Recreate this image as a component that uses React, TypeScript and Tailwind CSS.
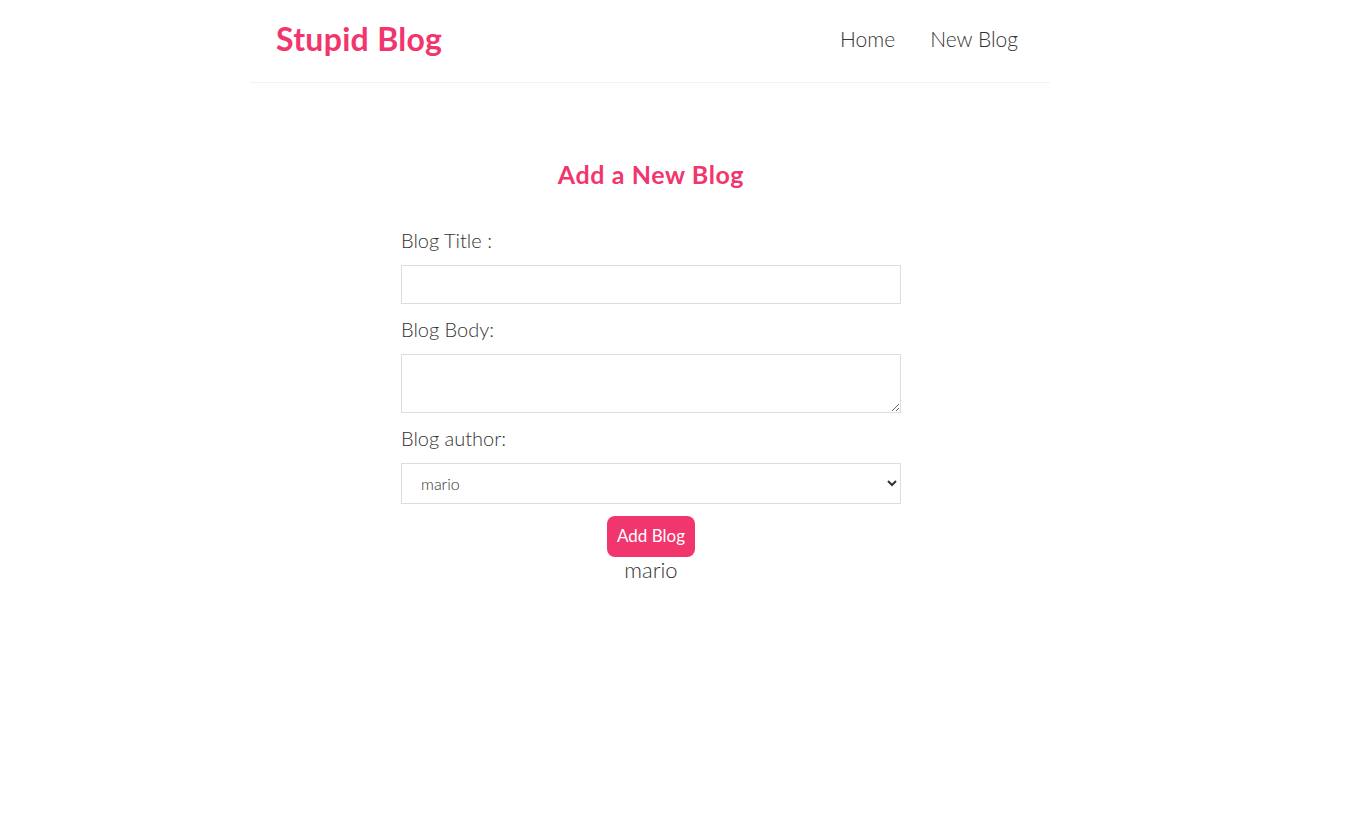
import { useState } from "react";

const Navbar = () => {
  return (
    <nav className="max-w-[800px] mx-auto h-[83px] pb-[4px] flex items-center justify-between px-[26px] pr-[32px] border-b border-[#f2f2f2]">
      <h1 className="text-[32px] font-bold text-[#f1356d] tracking-[0.3px]">Stupid Blog</h1>
      <div className="flex items-center gap-[35px] text-[21px] font-light text-[#333]">
        <a href="#">Home</a>
        <a href="#">New Blog</a>
      </div>
    </nav>
  );
};

const Create = () => {
  const [title, setTitle] = useState("");
  const [body, setBody] = useState("");
  const [author, setAuthor] = useState("mario");

  return (
    <div className="pl-[2px]">
      <div className="max-w-[500px] mx-auto text-center pt-[73px]">
        <h2 className="text-[25px] font-bold text-[#f1356d] tracking-[0.6px] mb-[31px]">Add a New Blog</h2>
        <form className="text-left" onSubmit={(e) => e.preventDefault()}>
          <label className="block text-[20px] text-[#333] font-light">Blog Title :</label>
          <input
            type="text"
            value={title}
            onChange={(e) => setTitle(e.target.value)}
            className="block w-full h-[39px] mt-[10px] mb-[10px] px-[6px] border border-[#ddd] outline-none"
          />
          <label className="block text-[20px] text-[#333] font-light">Blog Body:</label>
          <textarea
            value={body}
            onChange={(e) => setBody(e.target.value)}
            className="block w-full h-[59px] mt-[10px] mb-[10px] px-[6px] border border-[#ddd] outline-none"
          />
          <label className="block text-[20px] text-[#333] font-light">Blog author:</label>
          <select
            value={author}
            onChange={(e) => setAuthor(e.target.value)}
            className="block w-full h-[41px] mt-[10px] px-[15px] border border-[#ddd] text-[16px] font-light text-[#333] outline-none appearance-auto"
          >
            <option value="mario">mario</option>
            <option value="yoshi">yoshi</option>
          </select>
          <div className="flex flex-col items-center">
            <button className="mt-[12px] bg-[#f1356d] text-white text-[17px] rounded-[8px] h-[41px] px-[10px]">
              Add Blog
            </button>
            <p className="text-[22px] font-light text-[#333] leading-[26px]">{author}</p>
          </div>
        </form>
      </div>
    </div>
  );
};

export default function App() {
  return (
    <div className="w-[1300px] min-h-[831px] bg-white font-['Lato',sans-serif]">
      <Navbar />
      <Create />
    </div>
  );
}
